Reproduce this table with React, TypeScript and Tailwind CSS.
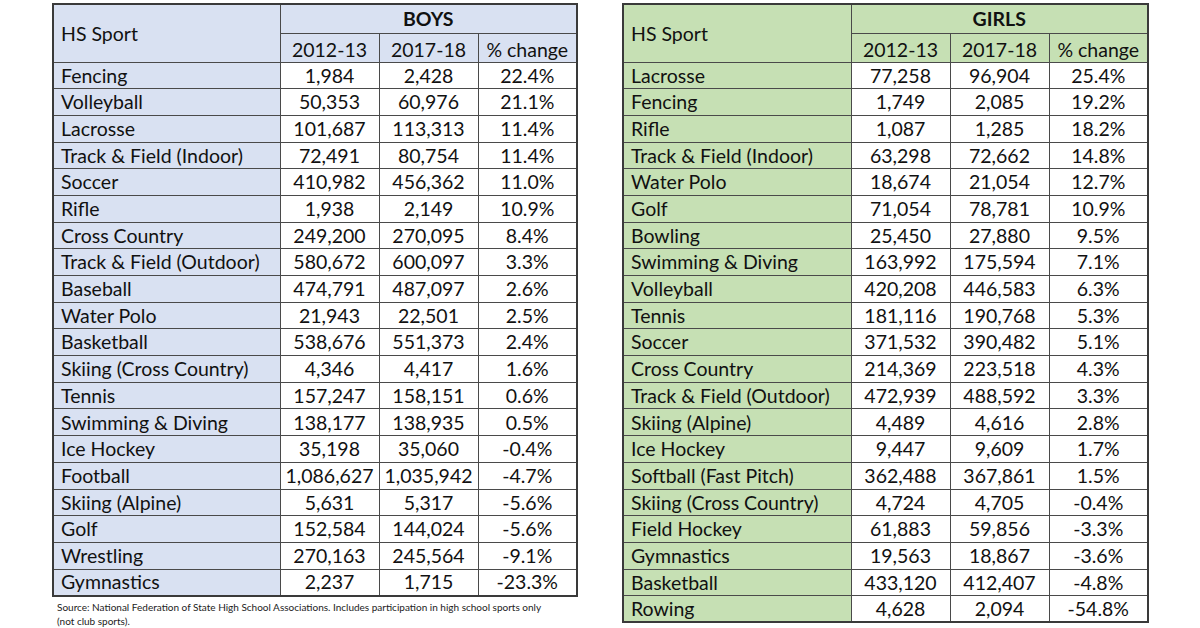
import React from "react";

type Row = [string, string, string, string];

const boys: Row[] = [
  ["Fencing", "1,984", "2,428", "22.4%"],
  ["Volleyball", "50,353", "60,976", "21.1%"],
  ["Lacrosse", "101,687", "113,313", "11.4%"],
  ["Track & Field (Indoor)", "72,491", "80,754", "11.4%"],
  ["Soccer", "410,982", "456,362", "11.0%"],
  ["Rifle", "1,938", "2,149", "10.9%"],
  ["Cross Country", "249,200", "270,095", "8.4%"],
  ["Track & Field (Outdoor)", "580,672", "600,097", "3.3%"],
  ["Baseball", "474,791", "487,097", "2.6%"],
  ["Water Polo", "21,943", "22,501", "2.5%"],
  ["Basketball", "538,676", "551,373", "2.4%"],
  ["Skiing (Cross Country)", "4,346", "4,417", "1.6%"],
  ["Tennis", "157,247", "158,151", "0.6%"],
  ["Swimming & Diving", "138,177", "138,935", "0.5%"],
  ["Ice Hockey", "35,198", "35,060", "-0.4%"],
  ["Football", "1,086,627", "1,035,942", "-4.7%"],
  ["Skiing (Alpine)", "5,631", "5,317", "-5.6%"],
  ["Golf", "152,584", "144,024", "-5.6%"],
  ["Wrestling", "270,163", "245,564", "-9.1%"],
  ["Gymnastics", "2,237", "1,715", "-23.3%"],
];

const girls: Row[] = [
  ["Lacrosse", "77,258", "96,904", "25.4%"],
  ["Fencing", "1,749", "2,085", "19.2%"],
  ["Rifle", "1,087", "1,285", "18.2%"],
  ["Track & Field (Indoor)", "63,298", "72,662", "14.8%"],
  ["Water Polo", "18,674", "21,054", "12.7%"],
  ["Golf", "71,054", "78,781", "10.9%"],
  ["Bowling", "25,450", "27,880", "9.5%"],
  ["Swimming & Diving", "163,992", "175,594", "7.1%"],
  ["Volleyball", "420,208", "446,583", "6.3%"],
  ["Tennis", "181,116", "190,768", "5.3%"],
  ["Soccer", "371,532", "390,482", "5.1%"],
  ["Cross Country", "214,369", "223,518", "4.3%"],
  ["Track & Field (Outdoor)", "472,939", "488,592", "3.3%"],
  ["Skiing (Alpine)", "4,489", "4,616", "2.8%"],
  ["Ice Hockey", "9,447", "9,609", "1.7%"],
  ["Softball (Fast Pitch)", "362,488", "367,861", "1.5%"],
  ["Skiing (Cross Country)", "4,724", "4,705", "-0.4%"],
  ["Field Hockey", "61,883", "59,856", "-3.3%"],
  ["Gymnastics", "19,563", "18,867", "-3.6%"],
  ["Basketball", "433,120", "412,407", "-4.8%"],
  ["Rowing", "4,628", "2,094", "-54.8%"],
];

function SportTable({
  title,
  rows,
  tint,
  sportW,
}: {
  title: string;
  rows: Row[];
  tint: string;
  sportW: string;
}) {
  const cell = "border border-[#4a4a4a] p-0";
  return (
    <table className="border-collapse border-2 border-[#3a3a3a] text-[19.5px] leading-none text-[#111] table-fixed">
      <colgroup>
        <col className={sportW} />
        <col className="w-[99px]" />
        <col className="w-[99px]" />
        <col className="w-[99px]" />
      </colgroup>
      <thead>
        <tr className="h-[29px]">
          <th rowSpan={2} className={`${cell} ${tint} text-left font-normal pl-[7px]`}>
            HS Sport
          </th>
          <th colSpan={3} className={`${cell} ${tint} font-bold text-center`}>
            {title}
          </th>
        </tr>
        <tr className="h-[29px]">
          <th className={`${cell} ${tint} font-normal text-center pt-[4px]`}>2012-13</th>
          <th className={`${cell} ${tint} font-normal text-center pt-[4px]`}>2017-18</th>
          <th className={`${cell} ${tint} font-normal text-center pt-[4px]`}>% change</th>
        </tr>
      </thead>
      <tbody>
        {rows.map((r) => (
          <tr key={r[0]} className="h-[26.7px]">
            <td className={`${cell} ${tint} pl-[7px] whitespace-nowrap`}>{r[0]}</td>
            <td className={`${cell} bg-white text-center whitespace-nowrap`}>{r[1]}</td>
            <td className={`${cell} bg-white text-center whitespace-nowrap`}>{r[2]}</td>
            <td className={`${cell} bg-white text-center whitespace-nowrap`}>{r[3]}</td>
          </tr>
        ))}
      </tbody>
    </table>
  );
}

export default function App() {
  return (
    <div
      className="w-[1200px] h-[628px] bg-white overflow-hidden"
      style={{ fontFamily: "Lato, 'Open Sans', sans-serif" }}
    >
      <div className="flex items-start pl-[52px] pt-[3px] gap-[44px]">
        <div className="flex flex-col">
          <SportTable title="BOYS" rows={boys} tint="bg-[#d9e1f2]" sportW="w-[227px]" />
          <p className="text-[10px] leading-[14px] text-[#222] pl-[5px] pt-[3px] w-[490px]">
            Source: National Federation of State High School Associations. Includes participation
            in high school sports only (not club sports).
          </p>
        </div>
        <SportTable title="GIRLS" rows={girls} tint="bg-[#c6e0b4]" sportW="w-[228px]" />
      </div>
    </div>
  );
}
